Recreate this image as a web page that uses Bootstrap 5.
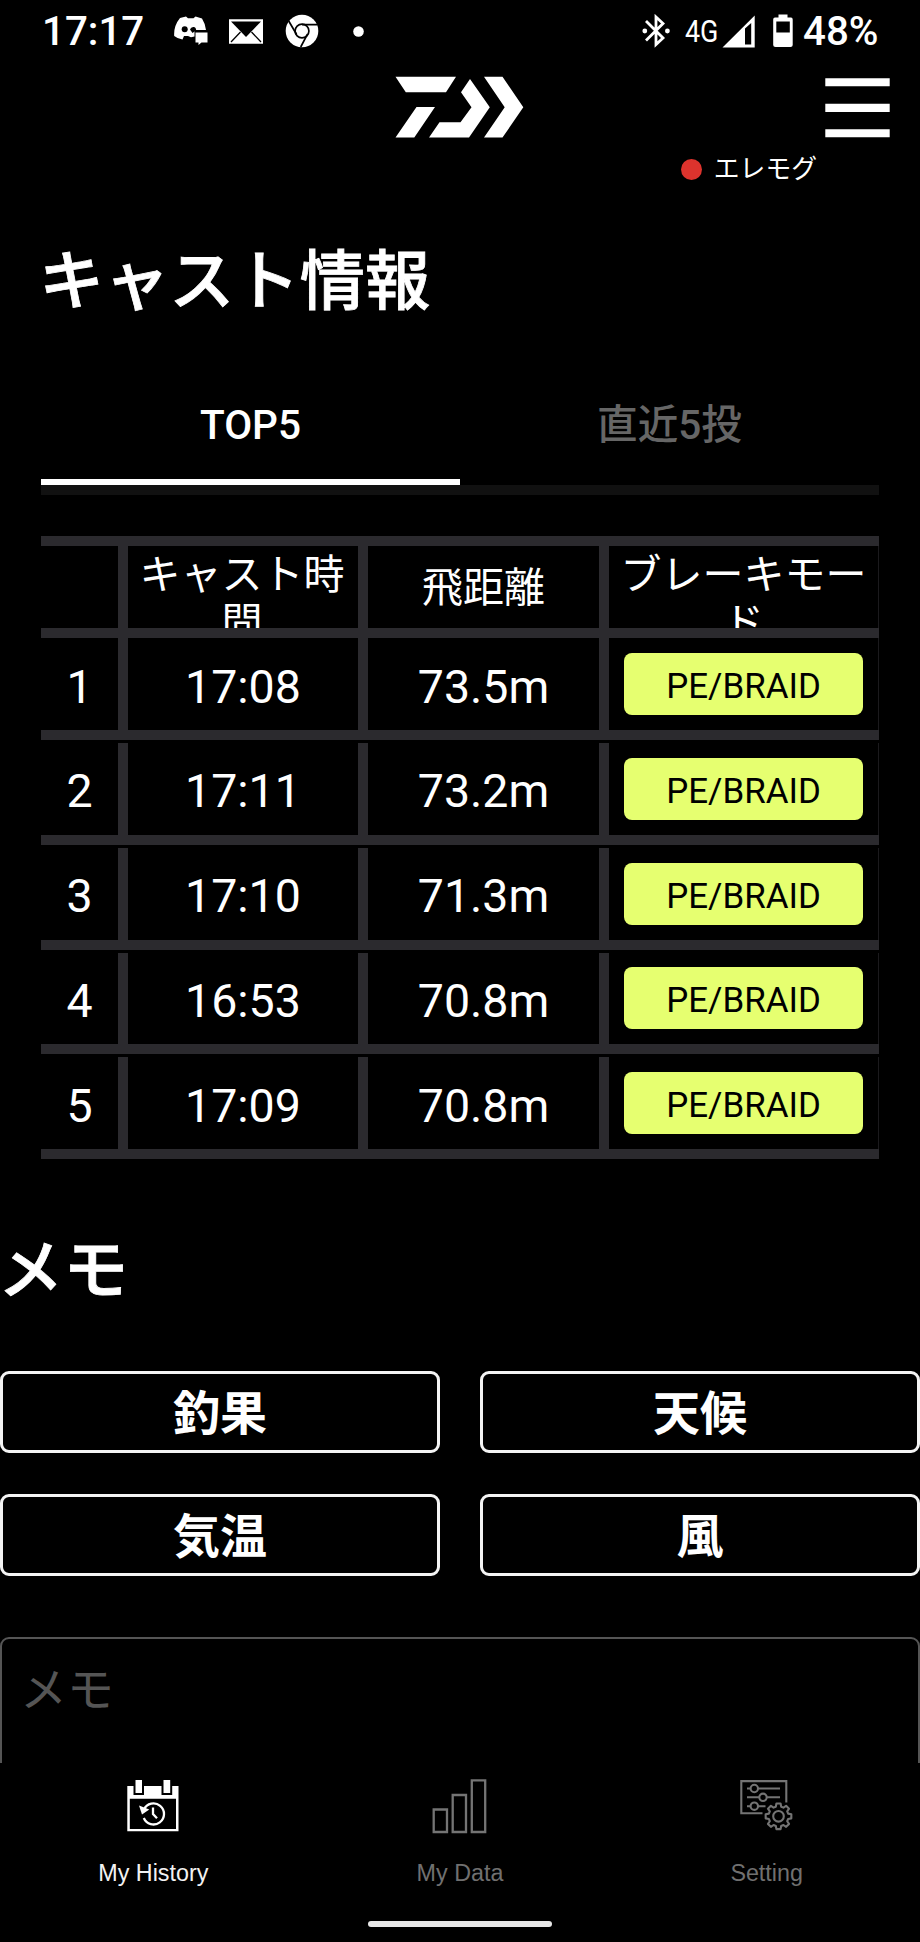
<!DOCTYPE html>
<html lang="ja" data-bs-theme="dark">
<head>
<meta charset="utf-8">
<meta name="viewport" content="width=device-width, initial-scale=1">
<title>キャスト情報</title>
<link href="https://cdn.jsdelivr.net/npm/bootstrap@5.3.0/dist/css/bootstrap.min.css" rel="stylesheet">
<style>
  body { background: #000; color: #fff; font-family: Roboto, "Noto Sans CJK JP", sans-serif; }
  .screen { height: 1942px; width: 920px; }
  svg { display: block; flex: none; }

  .status { height: 62px; padding: 0 40px 0 41px; }
  .status .clock { font-size: 40.3px; font-weight: 500; line-height: 60px; width: 133px; padding: 2px 0 0 1px; }
  .net { font-size: 32px; line-height: 60px; width: 37px; white-space: nowrap; }
  .net span { display: inline-block; transform: scaleX(.84); transform-origin: 0 50%; }
  .batt { font-size: 40.3px; font-weight: 500; line-height: 60px; width: 77px; padding-top: 2px; }

  .topbar { height: 138px; }
  .brand-row { height: 92px; padding: 14px 30px 0 0; }
  .side { width: 395px; }
  .device { font-size: 25.8px; line-height: 30px; padding-right: 103px; }
  .rec { width: 21px; height: 21px; background: #dd332d; margin-right: 12px; }

  .page-title, .memo-title { font-size: 65.2px; font-weight: 500; line-height: 96px; -webkit-text-stroke: .8px #fff; }
  .page-title { padding: 34px 0 1px; margin-left: -2px !important; }
  .switch { margin-top: 37px; font-size: 40.6px; font-weight: 500; line-height: 60px; border-bottom: 10px solid #111; }
  .switch div { height: 117px; padding-top: 27px; color: #666; }
  .switch .on { color: #fff; height: 111px; margin-bottom: 0; }
  .switch .tab-line { height: 6px; padding: 0; background: #fff; }

  .casts { margin-top: 41px; border-top: 10px solid #2b2a2e; }
  .line { display: grid; grid-template-columns: 87px 240px 241px 270px; border-bottom: 10px solid #2b2a2e; height: 101.75px; margin-bottom: 3px; }
  .line > div { border-right: 10px solid #2b2a2e; display: flex; align-items: center; justify-content: center; font-size: 46.5px; line-height: 50px; padding-top: 5px; overflow: hidden; }
  .line > div:last-child { border-right: 1px solid #1b1a1d; padding-top: 0; }
  .line.heads { height: 92px; margin-bottom: 0; }
  .line.heads > div { font-size: 41px; line-height: 47.6px; text-align: center; padding: 4px 10px 0; word-break: break-all; }
  .line.heads > div.two { align-items: flex-start; padding: 6px 4px 0; }
  .line.heads > div.two:nth-child(2) { padding: 6px 12px 0 10px; }
  .line.first { height: 102px; }
  .mode { background: #e6ff70; color: #000; border-radius: 8px; width: 239px; height: 62px; font-size: 34.9px; line-height: 67px; text-align: center; }

  .memo-title { margin: 64px 0 0 -2px; }
  .memo-grid { display: grid; grid-template-columns: 1fr 1fr; gap: 41px 40px; margin-top: 52px; }
  .memo-grid .btn { height: 82px; border: 3px solid #f4f4f4; border-radius: 9px; color: #fff; font-size: 47px; font-weight: 600; line-height: 76px; padding: 0; }
  .memo-grid .btn span { display: block; margin: 2px 0 -2px; }
  .memo-box { margin-top: 61px; height: 220px; border: 2px solid #555; border-radius: 9px; font-size: 47px; line-height: 60px; color: #555; padding: 21px 18px; }
  .content { height: 1563px; overflow: hidden; }

  .tabs-bottom { height: 179px; background: #000; font-family: "Liberation Sans", sans-serif; font-size: 23.3px; line-height: 26px; }
  .tabs-bottom .item { color: #707070; height: 158px; padding-top: 15px; width: 306.66px; }
  .tabs-bottom .item.on { color: #f2f2f2; }
  .tabs-bottom svg { margin-bottom: 26px; }
  .home { width: 184px; height: 5.5px; background: #e8e8e8; border-radius: 3px; }
</style>
</head>
<body>
<div class="screen d-flex flex-column overflow-hidden">

  <div class="status d-flex align-items-center">
    <div class="clock">17:17</div>
    <svg width="34" height="30" viewBox="174 18 34 30" fill="#fff">
      <path d="M180 20 186 18.400 188 20.300H193.500L195.500 18.400 202 20.400Q205.500 26 206 32H194.500V38.500L191 39.200 188 38H184L182.500 41.500Q178 41 174.200 38Q173.500 28 180 20Z"/>
      <circle cx="184.700" cy="31.300" r="3" fill="#000"/><path d="M190 31.500Q191 28.500 194 29 196.500 30 196 32.500L192.500 35Z" fill="#000"/>
      <path d="M195.500 34.500H207.500V44.500H201.500L198.500 47V44.500H195.500Z"/>
    </svg>
    <svg style="margin-left:21px" width="34" height="25" viewBox="229 18.500 34 25">
      <path d="M229 18.800H263V43.200H229Z" fill="#fff"/>
      <path d="M231 21H261L246 36.500Z" fill="#000"/>
      <path d="M231 41.500 240.500 31.500M261 41.500 251.500 31.500" stroke="#000" stroke-width="1.300"/>
    </svg>
    <svg style="margin-left:22px" width="34" height="34" viewBox="285.300 13.500 34 34">
      <circle cx="302.300" cy="30.500" r="16.300" fill="#fff"/>
      <g fill="none" stroke="#000" stroke-width="1.700"><circle cx="302.300" cy="30.500" r="6.900"/><path d="M302.300 24.100H318M296.800 33.700 289 20.500M307.800 33.700 301 46.500"/></g>
    </svg>
    <svg style="margin-left:34px" width="11" height="11"><circle cx="5.500" cy="5.500" r="5.300" fill="#fff"/></svg>
    <svg class="ms-auto" width="28" height="34" viewBox="643 14 28 34">
      <path d="M647 21 664 38 657 44.500V17L664 23.500 647 40.500" fill="none" stroke="#fff" stroke-width="2.800"/>
      <circle cx="645.800" cy="31" r="2.400" fill="#fff"/><circle cx="668.400" cy="31" r="2.400" fill="#fff"/>
    </svg>
    <div class="net" style="margin-left:15px"><span>4G</span></div>
    <svg width="33" height="33" viewBox="722.500 14 33 33"><path fill="#fff" fill-rule="evenodd" d="M723 46.500 755.200 14.500V46.500ZM745.500 27.500V43.500H751.700V22Z"/></svg>
    <svg style="margin-left:18px" width="20" height="34" viewBox="773.500 13.500 20 34"><path fill="#fff" fill-rule="evenodd" d="M779 14H788V17H791.500Q793.200 17 793.200 19V44.500Q793.200 46.600 791 46.600H776Q773.700 46.600 773.700 44.500V19Q773.700 17 775.500 17H779ZM776.800 21V32H790.300V21Z"/></svg>
    <div class="batt" style="margin-left:10px">48%</div>
  </div>

  <header class="topbar">
    <div class="brand-row d-flex align-items-start">
      <div class="side"></div>
      <svg width="129" height="62" viewBox="395 76 129 62" fill="#fff">
        <path d="M395.500 76.700H456L446 92.200H405.800ZM416.500 107H435L414.300 137.600H395.500ZM439.500 122.300H460.500L471.500 107.300 461 92.200 470 79 489.800 107.300 469 137.600H429ZM484 76.700H502.500L523.300 107.300 502.500 137.600H484L504.700 107.300Z"/>
      </svg>
      <svg class="ms-auto" width="65" height="62" viewBox="825 76 65 62" fill="#fff"><path d="M825.300 78.200h64.400v8.100h-64.400zM825.300 103.800h64.400v8.100h-64.400zM825.300 129.200h64.400v8h-64.400z"/></svg>
    </div>
    <div class="device d-flex justify-content-end align-items-center"><span class="rec rounded-circle"></span><span>エレモグ</span></div>
  </header>

  <main class="content flex-shrink-0">
    <section style="padding:0 41px">
      <h1 class="page-title m-0">キャスト情報</h1>
      <div class="switch d-flex text-center">
        <section class="w-50"><div class="on">TOP5</div><div class="tab-line"></div></section>
        <section class="w-50"><div>直近5投</div></section>
      </div>
      <div class="casts">
        <div class="line heads"><div></div><div class="two">キャスト時間</div><div>飛距離</div><div class="two">ブレーキモード</div></div>
        <div class="line first"><div>1</div><div>17:08</div><div>73.5m</div><div><span class="mode">PE/BRAID</span></div></div>
        <div class="line"><div>2</div><div>17:11</div><div>73.2m</div><div><span class="mode">PE/BRAID</span></div></div>
        <div class="line"><div>3</div><div>17:10</div><div>71.3m</div><div><span class="mode">PE/BRAID</span></div></div>
        <div class="line"><div>4</div><div>16:53</div><div>70.8m</div><div><span class="mode">PE/BRAID</span></div></div>
        <div class="line"><div>5</div><div>17:09</div><div>70.8m</div><div><span class="mode">PE/BRAID</span></div></div>
      </div>
    </section>
    <h2 class="memo-title">メモ</h2>
    <div class="memo-grid">
      <button class="btn"><span>釣果</span></button><button class="btn"><span>天候</span></button>
      <button class="btn"><span>気温</span></button><button class="btn"><span>風</span></button>
    </div>
    <div class="memo-box">メモ</div>
  </main>

  <nav class="tabs-bottom flex-shrink-0">
    <div class="d-flex text-center">
      <div class="item on d-flex flex-column align-items-center">
        <svg width="54" height="56" viewBox="126.500 1778 54 56">
          <path d="M127.800 1786H179V1831.300H127.800ZM130.300 1798.700V1829H176.500V1798.700Z" fill="#fff" fill-rule="evenodd"/>
          <path d="M134 1778H144.500V1795H134ZM162 1778H172.700V1795H162Z" fill="#000"/>
          <path d="M136 1780H142.500V1793H136ZM164 1780H170.700V1793H164Z" fill="#fff"/>
          <path d="M144.500 1809.500A10.500 10.500 0 1 1 144.300 1818M153.500 1807.500V1814L157.500 1818.200" fill="none" stroke="#fff" stroke-width="2.300"/>
          <path d="M139.500 1805.500 142.500 1814.500 149.800 1809.500" fill="#fff"/>
        </svg>
        <span>My History</span>
      </div>
      <div class="item d-flex flex-column align-items-center">
        <svg width="56" height="56" viewBox="431.500 1778 56 56" fill="none" stroke="#747474" stroke-width="2.300"><path d="M433.200 1809.500H446.500V1832H433.200ZM452.200 1795H465.500V1832H452.200ZM471.300 1780.300H484.700V1832H471.300Z"/></svg>
        <span>My Data</span>
      </div>
      <div class="item d-flex flex-column align-items-center">
        <svg width="54" height="56" viewBox="740 1778 54 56" fill="none" stroke="#747474" stroke-width="2.100">
          <path d="M762.500 1813.300H741.300V1781.100H786.300V1802.500M747 1788.500H750.500M758 1788.500H780M747 1797.300H759M767 1797.300H780M747 1806.200H750.500M758 1806.200H765.500"/>
          <circle cx="754.300" cy="1788.500" r="3.700"/><circle cx="763" cy="1797.300" r="3.700"/><circle cx="754.300" cy="1806.200" r="3.700"/>
          <circle cx="778.500" cy="1816.300" r="5.300"/>
          <path id="gear" stroke-linejoin="round"/>
        </svg>
        <span>Setting</span>
      </div>
    </div>
    <div class="home mx-auto"></div>
  </nav>
</div>
<script>
  // Eight-toothed gear outline around the hub
  const n = 8, cx = 778.5, cy = 1816.3, pts = [];
  for (let i = 0; i < n; i++) {
    const a = i * 2 * Math.PI / n - Math.PI / 2;
    for (const [d, r] of [[-.27, 10], [-.16, 13], [.16, 13], [.27, 10]])
      pts.push((cx + r * Math.cos(a + d)).toFixed(2) + ' ' + (cy + r * Math.sin(a + d)).toFixed(2));
  }
  document.getElementById('gear').setAttribute('d', 'M' + pts.join('L') + 'Z');
</script>
<script src="https://cdn.jsdelivr.net/npm/bootstrap@5.3.0/dist/js/bootstrap.bundle.min.js"></script>
</body>
</html>
